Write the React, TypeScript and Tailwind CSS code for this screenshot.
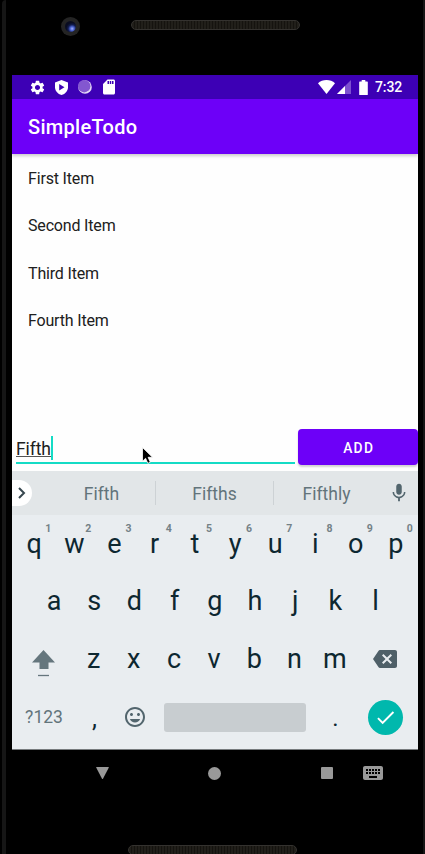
import React from "react";
import {
  MdBackspace,
  MdCheck,
  MdKeyboard,
  MdMic,
  MdSdCard,
  MdSettings,
  MdTagFaces,
} from "react-icons/md";

const items = ["First Item", "Second Item", "Third Item", "Fourth Item"];
const topRow = ["q", "w", "e", "r", "t", "y", "u", "i", "o", "p"];
const middleRow = ["a", "s", "d", "f", "g", "h", "j", "k", "l"];
const bottomRow = ["z", "x", "c", "v", "b", "n", "m"];

function Key({ label, hint }: { label: string; hint?: string }) {
  return (
    <div className="relative flex h-[58px] w-[40.2px] items-center justify-center text-[27px] leading-none text-[#0d2730]">
      {label}
      {hint && (
        <span className="absolute right-[3px] top-[8px] text-[10.5px] font-bold leading-[12px] text-[#748187]">
          {hint}
        </span>
      )}
    </div>
  );
}

function Speaker() {
  return (
    <div className="h-[10px] w-[169px] rounded-full border border-[#34322f] bg-[repeating-linear-gradient(90deg,#211f1a_0px,#211f1a_2px,#15130f_2px,#15130f_3px)]" />
  );
}

function StatusBar() {
  return (
    <div className="flex h-6 shrink-0 items-center bg-[#3d00b5] text-white">
      <MdSettings className="ml-[17px] size-[17px]" />
      <svg className="ml-[8.5px] h-[15px] w-[13px]" viewBox="0 0 13 15">
        <path d="M6.5 0 0 2.6v4.6c0 3.7 2.7 6.7 6.5 7.8 3.8-1.1 6.5-4.1 6.5-7.8V2.6z" fill="currentColor" />
        <path d="M4.2 4v6.4l5.3-3.2z" fill="#3d00b5" />
      </svg>
      <svg className="ml-[10px] size-[14px]" viewBox="0 0 14 14">
        <circle cx="7" cy="7" r="6.8" fill="#e4d9f6" />
        <circle cx="6.2" cy="6.2" r="6.2" fill="#8357d0" />
      </svg>
      <MdSdCard className="ml-[8px] size-[18px]" />
      <svg className="ml-auto h-[14px] w-[17px]" viewBox="0 0 17 14">
        <path d="M8.5 14 0 3.2C2.3 1.2 5.2 0 8.5 0S14.7 1.2 17 3.2z" fill="currentColor" />
      </svg>
      <svg className="ml-[2.5px] size-[14px]" viewBox="0 0 14 14">
        <path d="M14 0v14H0z" fill="#7d50d0" />
        <path d="M8 6v8H0z" fill="currentColor" />
      </svg>
      <svg className="ml-[8px] h-[15px] w-[9px]" viewBox="0 0 9 15">
        <path d="M2.7 0h3.6v1.5h1.9q.6 0 .6.6v12.3q0 .6-.6.6H.8q-.6 0-.6-.6V2.1q0-.6.6-.6h1.9z" fill="currentColor" />
      </svg>
      <span className="ml-[7px] mr-[16px] text-[14px] font-medium leading-none tracking-[-0.15px]">7:32</span>
    </div>
  );
}

function AddItemRow() {
  return (
    <div className="flex h-[42px] shrink-0 items-start">
      <div className="relative ml-1 h-[35px] w-[279px] border-b-2 border-[#14dbc5]">
        <div className="flex items-start pt-[7px]">
          <span className="h-[21px] border-b border-[#555] text-[17.5px] leading-[26px] tracking-[-0.1px] text-[#202020]">
            Fifth
          </span>
          <span className="h-6 w-[2px] bg-[#14dbc5]" />
        </div>
        <svg className="absolute left-[126px] top-[18px] h-[17px] w-[12px]" viewBox="0 0 12 17">
          <path d="M.5.5v13.8l3.1-3 2.2 5 2.5-1.1-2.2-4.9h4.4z" fill="#000" stroke="#fff" strokeWidth=".8" />
        </svg>
      </div>
      <button className="ml-[3.4px] flex h-[36px] flex-1 items-center justify-center rounded-[4px] bg-[#6d00f8] pl-[1px] pt-[2px] text-[13.8px] font-medium tracking-[1.3px] text-white shadow-[0_2px_2px_rgba(0,0,0,0.18)]">
        ADD
      </button>
    </div>
  );
}

function Suggestions() {
  return (
    <div className="flex h-11 shrink-0 items-center bg-[#e2e6e8] text-[17.5px] text-[#62747b]">
      <div className="flex h-[26px] w-5 items-center rounded-r-full bg-white">
        <svg className="ml-[6px] h-[12px] w-[8px]" viewBox="0 0 8 12">
          <path d="m1 1 5 5-5 5" fill="none" stroke="#37474f" strokeWidth="2" />
        </svg>
      </div>
      <div className="ml-[15px] w-[109px] pt-[2px] text-center">Fifth</div>
      <div className="-ml-px h-6 w-px bg-[#cdd2d5]" />
      <div className="w-[117px] pt-[2px] text-center">Fifths</div>
      <div className="h-6 w-px bg-[#cdd2d5]" />
      <div className="w-[105px] pt-[2px] text-center">Fifthly</div>
      <MdMic className="ml-[9px] size-[22px] text-[#52656d]" />
    </div>
  );
}

function Keyboard() {
  return (
    <div className="flex flex-1 flex-col bg-[#e9edf0]">
      <div className="flex pl-[2px]">
        {topRow.map((k, i) => (
          <Key key={k} label={k} hint={String((i + 1) % 10)} />
        ))}
      </div>
      <div className="-mt-px flex pl-[22px]">
        {middleRow.map((k) => (
          <Key key={k} label={k} />
        ))}
      </div>
      <div className="flex items-center pl-[2px]">
        <div className="flex w-[59.5px] justify-center pt-[9px]">
          <svg className="h-[27px] w-[23px]" viewBox="0 0 23 27">
            <path d="M11.5 0 23 12.5h-6.5V19h-9v-6.500H0z" fill="#65767d" />
            <path d="M6 25.5h11" stroke="#65767d" strokeWidth="1.3" />
          </svg>
        </div>
        {bottomRow.map((k) => (
          <Key key={k} label={k} />
        ))}
        <MdBackspace className="ml-[18px] size-6 text-[#4f6068]" />
      </div>
      <div className="flex h-[58px] items-center pl-[2px]">
        <div className="w-[60px] pt-px text-center text-[17.5px] text-[#62747b]">?123</div>
        <div className="w-[41px] pt-[3px] text-center text-[25px] leading-none text-[#0d2730]">,</div>
        <div className="flex w-[39px] justify-center">
          <MdTagFaces className="size-6 text-[#52656d]" />
        </div>
        <div className="ml-[10px] h-[29px] w-[142px] rounded-[3px] bg-[#c8cdd0]" />
        <div className="w-[59px] pt-[2px] text-center text-[24px] leading-none text-[#0d2730]">.</div>
        <div className="ml-[3px] flex size-[35px] items-center justify-center rounded-full bg-[#00b8ad]">
          <MdCheck className="size-[23px] text-white" />
        </div>
      </div>
    </div>
  );
}

function NavigationBar() {
  return (
    <div className="flex h-[46px] items-center pl-[84px] text-[#999]">
      <svg className="h-[12px] w-[13px]" viewBox="0 0 14 12" preserveAspectRatio="none">
        <path d="M.7 0h12.6q.7 0 .4.7L7.5 11.7q-.5.5-1 0L.3.7Q0 0 .7 0z" fill="currentColor" />
      </svg>
      <div className="ml-[99px] size-[13px] rounded-full bg-[#999]" />
      <div className="ml-[100px] size-[12px] rounded-[1px] bg-[#999]" />
      <MdKeyboard className="ml-[28px] size-6" />
    </div>
  );
}

export default function App() {
  return (
    <div className="flex h-[854px] w-[425px] flex-col overflow-hidden border-r-2 border-[#151515] bg-black font-['Roboto','Noto_Sans',sans-serif]">
      <div className="flex flex-1 border-l-[2px] border-black">
        <div className="h-full w-[4px] rounded-tl-lg bg-[#161616]" />
        <div className="flex flex-1 flex-col pl-[6px]">
          <div className="flex h-[75px] shrink-0 items-start">
            <div className="ml-[49px] mt-[17px] flex size-[19px] items-center justify-center rounded-full bg-[#242424]">
              <div className="size-[11px] rounded-full bg-[radial-gradient(circle_at_65%_70%,#a3b4ff_0px,#4b63cf_2px,#111b4e_4px,#090c20_6px)]" />
            </div>
            <div className="ml-[51px] mt-[20px]">
              <Speaker />
            </div>
          </div>
          <main className="flex h-[675px] w-[406px] shrink-0 flex-col overflow-hidden border-b border-[#777b7d] bg-[#fefefe]">
            <StatusBar />
            <header className="relative flex h-[55px] shrink-0 items-center bg-[#6d00f8] pl-4 text-[20px] font-medium tracking-[0.3px] text-white shadow-[0_2px_3px_rgba(0,0,0,0.2)]">
              SimpleTodo
            </header>
            <ul className="h-[275px] shrink-0 pt-px text-[16px] tracking-[-0.17px] text-[#202020]">
              {items.map((item) => (
                <li key={item} className="flex h-[47.5px] items-center pl-4">
                  {item}
                </li>
              ))}
            </ul>
            <AddItemRow />
            <Suggestions />
            <Keyboard />
          </main>
          <NavigationBar />
          <div className="ml-[116px] mt-auto h-[9px] overflow-hidden">
            <Speaker />
          </div>
        </div>
      </div>
    </div>
  );
}
